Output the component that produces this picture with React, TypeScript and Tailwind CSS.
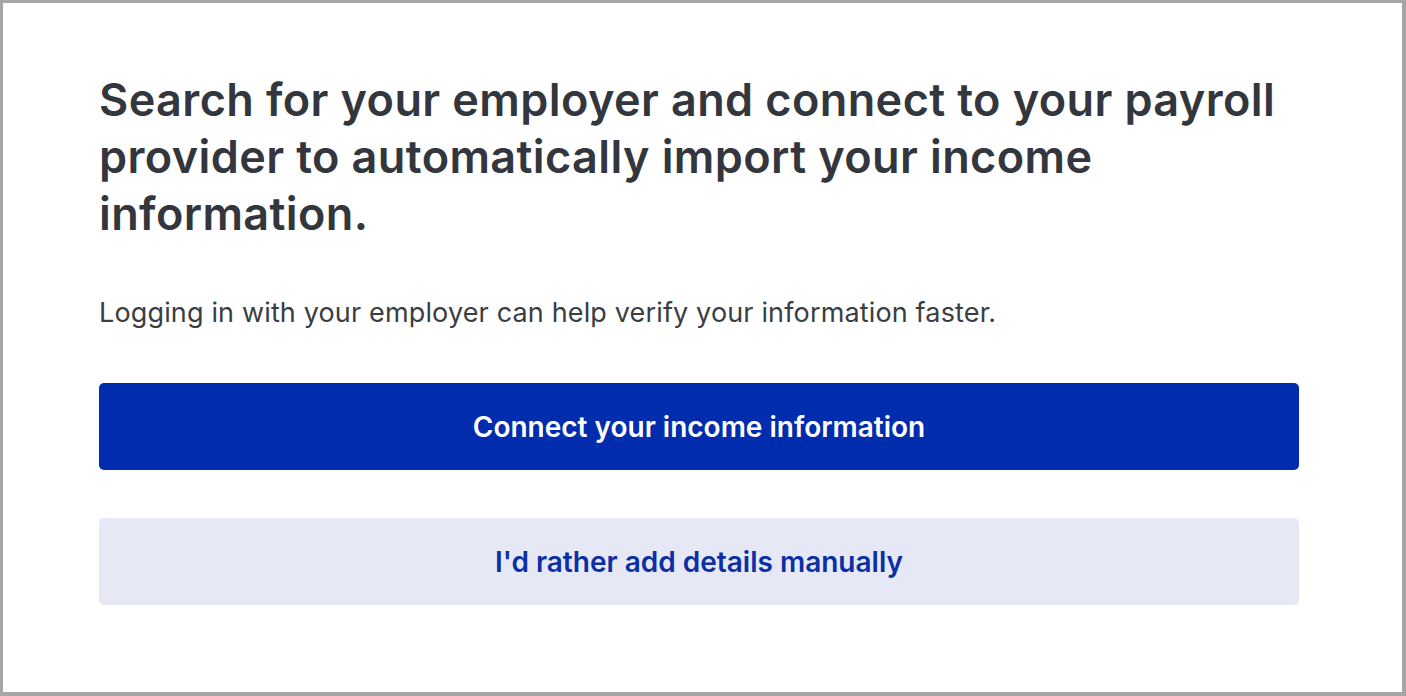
import React from "react";

export default function App() {
  return (
    <div
      className="w-[1406px] h-[696px] bg-white border-[#a6a6a6] border-t-[3px] border-l-[3px] border-r-[4px] border-b-[4px] box-border"
      style={{ fontFamily: "Inter, 'Noto Sans', sans-serif" }}
    >
      <div className="pl-[96px] pt-[68px] w-[1296px]">
        <h1 className="text-[45px] leading-[57px] font-semibold text-[#33373d] tracking-[0.4px]">
          Search for your employer and connect to your payroll provider to automatically import your income information.
        </h1>
        <p className="mt-[55px] text-[27px] leading-[32px] text-[#3a3d42] tracking-[0.15px]">
          Logging in with your employer can help verify your information faster.
        </p>
        <button className="mt-[54px] w-[1200px] h-[87px] rounded-[5px] bg-[#002cad] text-white text-[28px] font-semibold flex items-center justify-center">
          Connect your income information
        </button>
        <button className="mt-[48px] w-[1200px] h-[87px] rounded-[5px] bg-[#e6e8f5] text-[#0b2fa5] text-[28px] font-semibold flex items-center justify-center">
          I'd rather add details manually
        </button>
      </div>
    </div>
  );
}
